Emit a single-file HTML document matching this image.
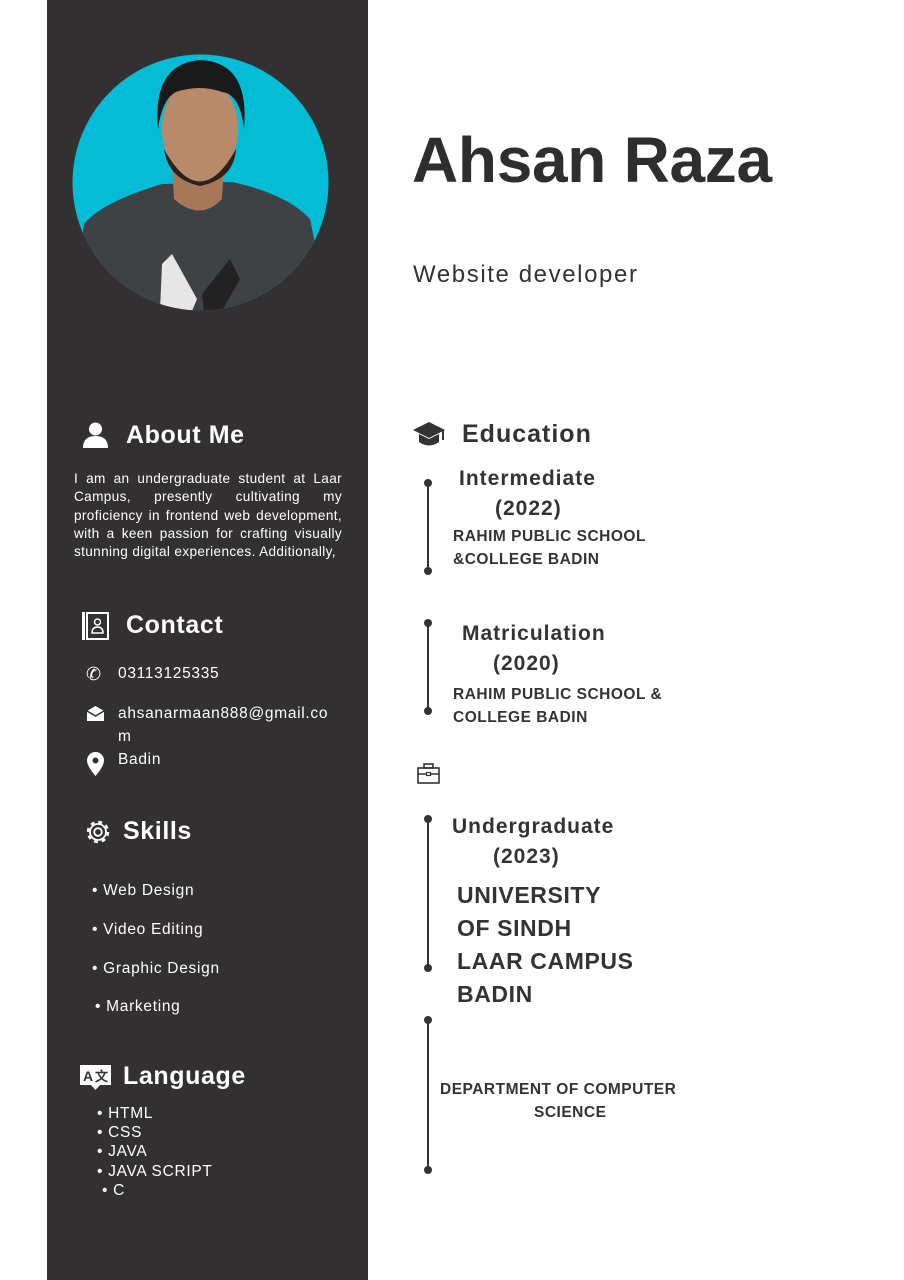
<!DOCTYPE html>
<html><head><meta charset="utf-8"><style>
*{margin:0;padding:0;box-sizing:border-box}
body{width:904px;height:1280px;background:#fff;position:relative;overflow:hidden;font-family:"Liberation Sans",sans-serif;color:#333}
.side{position:absolute;left:47px;top:0;width:321px;height:1280px;background:#323031}
.a{position:absolute;white-space:nowrap}
.w{color:#fff}
.h{font-weight:bold;font-size:25px;color:#fff;letter-spacing:0.6px}
.s{font-size:15.5px;color:#fff;letter-spacing:0.7px}
.about{position:absolute;left:74px;top:470px;width:268px;font-size:13.6px;line-height:18.3px;color:#fff;text-align:justify;text-align-last:left;letter-spacing:0.35px}
.dot{position:absolute;width:8px;height:8px;border-radius:50%;background:#333}
.line{position:absolute;width:2px;background:#333;left:427px}
.t{font-weight:bold;font-size:21px;color:#333;letter-spacing:1px}
.u{font-weight:bold;font-size:15.5px;color:#333;letter-spacing:0.5px}
.big{font-weight:bold;font-size:23px;color:#333;line-height:33px;letter-spacing:0.6px}
</style></head><body>
<div class="side"></div>
<svg class="a" style="left:72px;top:54px" width="257" height="257" viewBox="0 0 257 257">
<defs><clipPath id="c"><circle cx="128.5" cy="128.5" r="128"/></clipPath></defs>
<circle cx="128.5" cy="128.5" r="128" fill="#05bcd6"/>
<g clip-path="url(#c)">
<path d="M0 257 L12 170 Q30 148 90 130 L160 128 Q215 140 238 165 L257 257Z" fill="#3e4245"/>
<path d="M100 110 L102 145 Q128 168 150 145 L152 110Z" fill="#a77758"/>
<ellipse cx="128" cy="75" rx="38" ry="52" fill="#b98a6a"/>
<path d="M86 75 Q80 10 128 6 Q178 8 172 75 Q168 40 150 38 Q128 30 104 38 Q90 45 86 75Z" fill="#1a1a1a"/>
<path d="M92 95 Q128 160 164 95 Q162 125 128 132 Q96 125 92 95Z" fill="#2a2220"/>
<path d="M90 210 L100 200 L125 245 L120 257 L88 257Z" fill="#e6e6e6"/>
<path d="M130 240 L158 205 L168 225 L150 257 L132 257Z" fill="#222"/>
</g></svg>
<div class="a" style="left:412px;top:123px;font-size:64px;font-weight:bold;color:#2f2d2e;letter-spacing:-0.3px">Ahsan Raza</div>
<div class="a" style="left:413px;top:261px;font-size:24px;color:#333;letter-spacing:1.6px">Website developer</div>

<svg class="a" style="left:82px;top:422px" width="27" height="26" viewBox="0 0 27 26"><circle cx="13.5" cy="7" r="6.5" fill="#fff"/><path d="M1 26 Q1 14 13.5 14 Q26 14 26 26Z" fill="#fff"/></svg>
<div class="a h" style="left:126px;top:421px">About Me</div>
<div class="about">I am an undergraduate student at Laar Campus, presently cultivating my proficiency in frontend web development, with a keen passion for crafting visually stunning digital experiences. Additionally,</div>

<svg class="a" style="left:82px;top:612px" width="27" height="28" viewBox="0 0 27 28"><rect x="0" y="0" width="3" height="28" fill="#fff"/><rect x="5" y="1" width="21" height="26" fill="none" stroke="#fff" stroke-width="2"/><circle cx="15.5" cy="10" r="3" fill="none" stroke="#fff" stroke-width="1.5"/><path d="M10 21 Q10 15 15.5 15 Q21 15 21 21Z" fill="none" stroke="#fff" stroke-width="1.5"/></svg>
<div class="a h" style="left:126px;top:611px">Contact</div>
<div class="a w" style="left:86px;top:664px;font-size:18px">&#x2706;</div>
<div class="a s" style="left:118px;top:665px">03113125335</div>
<svg class="a" style="left:87px;top:706px" width="17" height="15" viewBox="0 0 17 15"><path d="M0 5 L8.5 0 L17 5 L17 15 L0 15Z" fill="#fff"/><path d="M0 5 L8.5 10 L17 5" stroke="#323031" stroke-width="1.5" fill="none"/></svg>
<div class="a s" style="left:118px;top:705px">ahsanarmaan888@gmail.co</div>
<div class="a s" style="left:118px;top:728px">m</div>
<svg class="a" style="left:87px;top:752px" width="17" height="24" viewBox="0 0 17 24"><path d="M8.5 0 A8.5 8.5 0 0 1 17 8.5 Q17 14 8.5 24 Q0 14 0 8.5 A8.5 8.5 0 0 1 8.5 0Z" fill="#fff"/><circle cx="8.5" cy="8.5" r="3" fill="#323031"/></svg>
<div class="a s" style="left:118px;top:751px">Badin</div>

<svg class="a" style="left:85px;top:819px" width="26" height="26" viewBox="0 0 26 26"><circle cx="13" cy="13" r="9.5" fill="none" stroke="#fff" stroke-width="3.5" stroke-dasharray="3.7 3.76"/><circle cx="13" cy="13" r="8" fill="none" stroke="#fff" stroke-width="1.8"/><circle cx="13" cy="13" r="3.8" fill="none" stroke="#fff" stroke-width="1.8"/></svg>
<div class="a h" style="left:123px;top:817px">Skills</div>
<div class="a s" style="left:92px;top:882px">• Web Design</div>
<div class="a s" style="left:92px;top:921px">• Video Editing</div>
<div class="a s" style="left:92px;top:960px">• Graphic Design</div>
<div class="a s" style="left:95px;top:998px">• Marketing</div>

<svg class="a" style="left:80px;top:1065px" width="31" height="25" viewBox="0 0 31 25"><path d="M0 0 H31 V20 H20 L15.5 25 L11 20 H0Z" fill="#fff"/><text x="3" y="16" font-family="Liberation Sans" font-weight="bold" font-size="14" fill="#323031">A</text><text x="15" y="16" font-family="Liberation Sans" font-weight="bold" font-size="13" fill="#323031">文</text></svg>
<div class="a h" style="left:123px;top:1062px">Language</div>
<div style="position:absolute;left:97px;top:1104px;font-size:15.5px;line-height:19.2px;color:#fff;letter-spacing:0.7px">
<div>• HTML</div><div>• CSS</div><div>• JAVA</div><div>• JAVA SCRIPT</div><div>&nbsp;• C</div></div>

<svg class="a" style="left:413px;top:421px" width="32" height="28" viewBox="0 0 32 28"><path d="M16 1 L32 9 L16 17 L0 9Z" fill="#333"/><path d="M6 13 V21 Q16 28 26 21 V13 L16 18Z" fill="#333"/><rect x="29" y="9" width="2" height="10" fill="#333"/></svg>
<div class="a t" style="left:462px;top:420px;font-size:25px">Education</div>

<div class="line" style="top:483px;height:88px"></div>
<div class="dot" style="left:424px;top:479px"></div><div class="dot" style="left:424px;top:567px"></div>
<div class="a t" style="left:459px;top:467px">Intermediate</div>
<div class="a t" style="left:495px;top:497px">(2022)</div>
<div class="a u" style="left:453px;top:528px">RAHIM PUBLIC SCHOOL</div>
<div class="a u" style="left:453px;top:551px">&amp;COLLEGE BADIN</div>

<div class="line" style="top:623px;height:88px"></div>
<div class="dot" style="left:424px;top:619px"></div><div class="dot" style="left:424px;top:707px"></div>
<div class="a t" style="left:462px;top:622px">Matriculation</div>
<div class="a t" style="left:493px;top:652px">(2020)</div>
<div class="a u" style="left:453px;top:686px">RAHIM PUBLIC SCHOOL &amp;</div>
<div class="a u" style="left:453px;top:709px">COLLEGE BADIN</div>

<svg class="a" style="left:417px;top:763px" width="23" height="21" viewBox="0 0 23 21"><rect x="1" y="5" width="21" height="15" fill="none" stroke="#333" stroke-width="1.6"/><rect x="7" y="1" width="9" height="4" fill="none" stroke="#333" stroke-width="1.6"/><path d="M1 11 H22" stroke="#333" stroke-width="1.6"/><rect x="9.5" y="9.5" width="4" height="3" fill="#fff" stroke="#333" stroke-width="1.2"/></svg>

<div class="line" style="top:820px;height:148px"></div>
<div class="dot" style="left:424px;top:815px"></div><div class="dot" style="left:424px;top:964px"></div>
<div class="a t" style="left:452px;top:815px">Undergraduate</div>
<div class="a t" style="left:493px;top:845px">(2023)</div>
<div style="position:absolute;left:457px;top:879px" class="big">UNIVERSITY<br>OF SINDH<br>LAAR CAMPUS<br>BADIN</div>

<div class="line" style="top:1020px;height:150px"></div>
<div class="dot" style="left:424px;top:1016px"></div><div class="dot" style="left:424px;top:1166px"></div>
<div class="a u" style="left:440px;top:1081px">DEPARTMENT OF COMPUTER</div>
<div class="a u" style="left:534px;top:1104px">SCIENCE</div>
</body></html>
